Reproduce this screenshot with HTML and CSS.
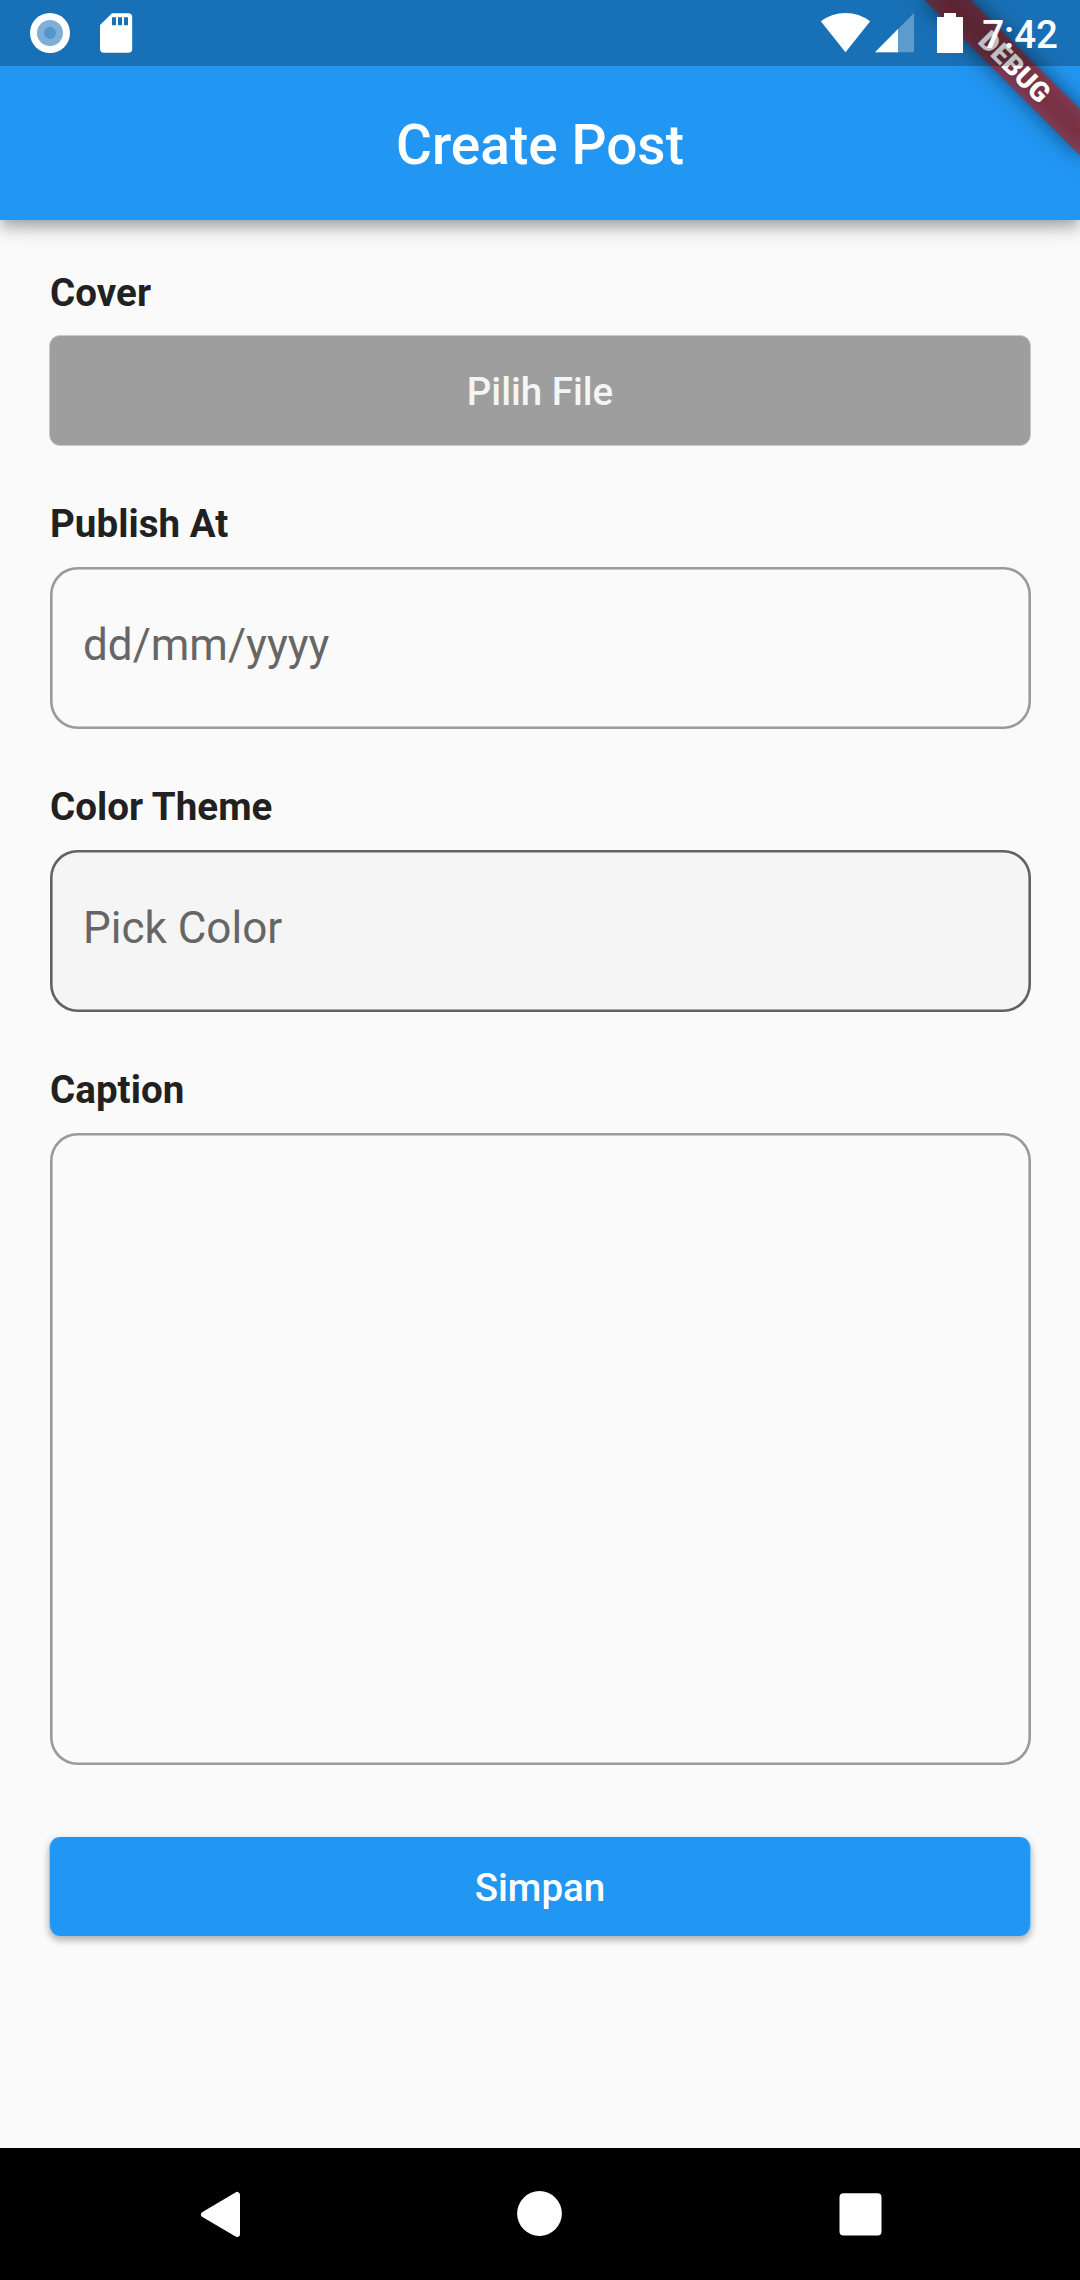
FILE: index.html
```html
<!DOCTYPE html>
<html lang="id">
<head>
<meta charset="utf-8">
<title>Create Post</title>
<link rel="stylesheet" href="styles.css">
</head>
<body>
<div class="screen">
  <header class="top">
    <h1 class="title">Create Post</h1>
    <div class="banner"><span class="banner-text">DEBUG</span></div>
    <div class="status">
      <svg class="status-left" width="140" height="66" viewBox="0 0 140 66">
        <circle cx="50" cy="33" r="20" fill="#fff"/>
        <circle cx="50" cy="33" r="13" fill="#7fafd8"/>
        <circle cx="50" cy="33" r="6" fill="#5495cb"/>
        <path fill="#fff" fill-rule="evenodd" d="M112 13.2h16.200a4 4 0 0 1 4 4v31.600a4 4 0 0 1-4 4h-24.200a4 4 0 0 1-4-4V25zM112 17.300v8h4v-8zM118 17.300v8h4v-8zM124 17.300v8h4v-8z"/>
      </svg>
      <svg class="status-right" width="150" height="66" viewBox="815 0 150 66">
        <path fill="#fff" d="M845.500 52.300L820.800 21.300Q832 13 845.500 13T870.200 21.300z"/>
        <path fill="#fff" fill-opacity=".3" d="M914 13v39.200H875z"/>
        <path fill="#fff" d="M898 29v23.200H875z"/>
        <path fill="#fff" d="M944 13h12v4h7v36h-26V17h7z"/>
      </svg>
      <span class="clock">7:42</span>
    </div>
  </header>
  <main class="form">
    <section class="group cover">
      <label class="label">Cover</label>
      <button class="btn btn-file">Pilih File</button>
    </section>
    <section class="group">
      <label class="label">Publish At</label>
      <input class="field" type="text" placeholder="dd/mm/yyyy">
    </section>
    <section class="group">
      <label class="label">Color Theme</label>
      <input class="field picker" type="text" placeholder="Pick Color">
    </section>
    <section class="group">
      <label class="label">Caption</label>
      <textarea class="field caption"></textarea>
    </section>
    <button class="btn btn-save">Simpan</button>
  </main>
  <nav class="nav">
    <svg width="60" height="60" viewBox="190 2184 60 60"><path d="M204 2214.500L237 2195V2234z" fill="#fff" stroke="#fff" stroke-width="6" stroke-linejoin="round"/></svg>
    <svg width="60" height="60" viewBox="510 2184 60 60"><circle cx="539.500" cy="2213.500" r="22.400" fill="#fff"/></svg>
    <svg width="60" height="60" viewBox="830 2184 60 60"><rect x="839.500" y="2193.300" width="42" height="42.300" rx="4" fill="#fff"/></svg>
  </nav>
</div>
</body>
</html>
```
FILE: styles.css
```css
* { box-sizing: border-box; }

body {
  margin: 0;
  background: #fafafa;
  font-family: Roboto, sans-serif;
}

.screen {
  display: flex;
  flex-direction: column;
  width: 1080px;
  height: 2280px;
  overflow: hidden;
}

.top {
  position: relative;
  flex: none;
  height: 220px;
  padding-top: 66px;
  background: #2196f3;
  box-shadow: 0 5.5px 11px -2.75px rgba(0, 0, 0, .2), 0 11px 13.75px rgba(0, 0, 0, .14), 0 2.75px 27.5px rgba(0, 0, 0, .12);
}

.title {
  margin: 0;
  color: #fff;
  font-size: 55px;
  font-weight: 500;
  line-height: 159px;
  text-align: center;
}

.status {
  position: absolute;
  inset: 0 0 auto 0;
  display: flex;
  height: 66px;
  padding-right: 22px;
  background: rgba(0, 0, 0, .25);
}

.status-right { margin-left: auto; }

.clock {
  margin-left: 17px;
  color: #fff;
  font-size: 38.5px;
  font-weight: 500;
  line-height: 69px;
}

/* Corner ribbon, rotated about the top right corner of the screen */
.banner {
  position: absolute;
  top: 77px;
  left: 970px;
  width: 220px;
  height: 33px;
  transform: rotate(45deg);
  transform-origin: 110px -77px;
  text-align: center;
}

.banner::before,
.banner::after {
  content: "";
  position: absolute;
  inset: 0;
}

.banner::before {
  z-index: -2;
  background: rgba(0, 0, 0, .5);
  filter: blur(10.9px);
}

.banner::after {
  z-index: -1;
  background: rgba(183, 28, 28, .627);
}

.banner-text {
  display: block;
  padding-left: 2px;
  color: #fff;
  font-size: 27.5px;
  font-weight: 900;
  line-height: 33px;
}

.form {
  display: flex;
  flex: 1;
  flex-direction: column;
  padding: 50px 49px 0;
}

.group {
  display: flex;
  flex-direction: column;
  gap: 21px;
  margin-bottom: 55px;
}

.cover { gap: 20px; }

.label {
  padding-left: 1px;
  color: #212121;
  font-size: 38.5px;
  font-weight: 700;
  letter-spacing: .05px;
  line-height: 45px;
}

.btn {
  flex: none;
  border: 0;
  border-radius: 11px;
  font-family: inherit;
  font-size: 38.5px;
  font-weight: 500;
}

.btn-file {
  height: 111px;
  padding-top: 3px;
  border: 1px solid #c8c8c8;
  background: #9e9e9e;
  color: #f5f5f5;
}

.btn-save {
  height: 99px;
  margin-top: 17px;
  padding-top: 3px;
  border: solid #8dc8f7;
  border-width: 0 1px;
  background: #2196f3;
  color: #fff;
  box-shadow: 0 5px 6px rgba(0, 0, 0, .2), 0 2px 10px rgba(0, 0, 0, .12);
}

.field {
  height: 162px;
  margin-left: 1px;
  padding: 52px 33px 58px;
  border: 0;
  border-radius: 27.5px;
  background: transparent;
  box-shadow: inset 0 0 0 2.600px #9a9a9a;
  color: #212121;
  font-family: inherit;
  font-size: 44px;
  resize: none;
  outline: 0;
}

.field::placeholder { color: #666; opacity: 1; }

.picker {
  background: #f5f5f5;
  box-shadow: inset 0 0 0 2.600px #626262;
}

.caption { height: 632px; }

.nav {
  display: grid;
  flex: none;
  grid-template-columns: repeat(3, 320px);
  place-content: center;
  justify-items: center;
  height: 132px;
  background: #000;
}
```
